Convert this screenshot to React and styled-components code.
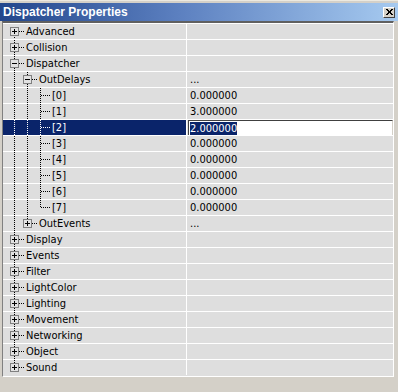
import React from 'react';
import styled, { createGlobalStyle } from 'styled-components';

const GlobalStyle = createGlobalStyle`
    html, body {
        margin: 0;
        padding: 0;
        background: #d4d0c8;
    }
    body {
        font-family: "DejaVu Sans Condensed", "Liberation Sans", Arial, sans-serif;
        font-size: 11px;
    }
`;

const rows = [
    { name: 'Advanced', level: 0, box: '+' },
    { name: 'Collision', level: 0, box: '+' },
    { name: 'Dispatcher', level: 0, box: '-' },
    { name: 'OutDelays', level: 1, box: '-', value: '...' },
    { name: '[0]', level: 2, value: '0.000000' },
    { name: '[1]', level: 2, value: '3.000000' },
    { name: '[2]', level: 2, value: '2.000000', selected: true },
    { name: '[3]', level: 2, value: '0.000000' },
    { name: '[4]', level: 2, value: '0.000000' },
    { name: '[5]', level: 2, value: '0.000000' },
    { name: '[6]', level: 2, value: '0.000000' },
    { name: '[7]', level: 2, value: '0.000000' },
    { name: 'OutEvents', level: 1, box: '+', value: '...' },
    { name: 'Display', level: 0, box: '+' },
    { name: 'Events', level: 0, box: '+' },
    { name: 'Filter', level: 0, box: '+' },
    { name: 'LightColor', level: 0, box: '+' },
    { name: 'Lighting', level: 0, box: '+' },
    { name: 'Movement', level: 0, box: '+' },
    { name: 'Networking', level: 0, box: '+' },
    { name: 'Object', level: 0, box: '+' },
    { name: 'Sound', level: 0, box: '+' },
];

// does row i have a sibling below it?
function hasNext(i) {
    const lvl = rows[i].level;
    for (let j = i + 1; j < rows.length; j++) {
        if (rows[j].level < lvl) return false;
        if (rows[j].level === lvl) return true;
    }
    return false;
}

function ancestor(i, lvl) {
    for (let j = i - 1; j >= 0; j--) {
        if (rows[j].level === lvl) return j;
    }
    return -1;
}

const STEP = 13;
const CX0 = 11;
const TEXT_GAP = 12;

function Guides({ index }) {
    const row = rows[index];
    const cx = CX0 + STEP * row.level;
    const width = cx + TEXT_GAP;
    const mid = 7;
    const lines = [];

    for (let a = 0; a < row.level; a++) {
        const anc = ancestor(index, a);
        if (anc >= 0 && hasNext(anc)) {
            const x = CX0 + STEP * a + 0.5;
            lines.push(<line key={'a' + a} x1={x} y1={0} x2={x} y2={15} />);
        }
    }

    const x = cx + 0.5;
    const top = index === 0 ? mid : 0;
    const bottom = hasNext(index) ? 15 : mid;
    lines.push(<line key="v" x1={x} y1={top} x2={x} y2={bottom} />);
    lines.push(
        <line key="h" x1={row.box ? cx + 5 : cx + 1} y1={mid + 0.5} x2={width - 1} y2={mid + 0.5} />
    );

    return (
        <svg width={width} height={15} shapeRendering="crispEdges" style={{ flex: 'none' }}>
            <g stroke="currentColor" strokeWidth="1" strokeDasharray="1 1">
                {lines}
            </g>
            {row.box && (
                <g>
                    <rect x={cx - 4 + 0.5} y={mid - 4 + 0.5} width={8} height={8} fill="#e2e2e2" stroke="#808080" />
                    <line x1={cx - 2} y1={mid + 0.5} x2={cx + 3} y2={mid + 0.5} stroke="#000" />
                    {row.box === '+' && (
                        <line x1={cx + 0.5} y1={mid - 2} x2={cx + 0.5} y2={mid + 3} stroke="#000" />
                    )}
                </g>
            )}
        </svg>
    );
}

function App() {
    return (
        <Window>
            <GlobalStyle />
            <TitleBar>
                <Title>Dispatcher Properties</Title>
                <CloseButton>
                    <svg width="7" height="6" viewBox="0 0 7 6" shapeRendering="crispEdges">
                        <path d="M0 0h2v1H0zM5 0h2v1H5zM1 1h2v1H1zM4 1h2v1H4zM2 2h3v1H2zM2 3h3v1H2zM1 4h2v1H1zM4 4h2v1H4zM0 5h2v1H0zM5 5h2v1H5z" fill="#000" />
                    </svg>
                </CloseButton>
            </TitleBar>
            <Panel>
                {rows.map((row, i) => (
                    <Row key={i}>
                        <NameCell $selected={row.selected}>
                            <Guides index={i} />
                            <span>{row.name}</span>
                        </NameCell>
                        <ValueCell>
                            {row.selected ? (
                                <EditBox>
                                    <Highlight>{row.value}</Highlight>
                                </EditBox>
                            ) : (
                                row.value
                            )}
                        </ValueCell>
                    </Row>
                ))}
            </Panel>
        </Window>
    );
}

export default App;

const Window = styled.div`
    width: 398px;
    height: 392px;
    display: flex;
    flex-direction: column;
    padding-top: 2px;
    box-sizing: border-box;
    background: #d4d0c8;
    border-top: 1px solid #ece9e0;
`;

const TitleBar = styled.div`
    height: 18px;
    display: flex;
    align-items: center;
    justify-content: space-between;
    padding: 0 3px 0 3px;
    background: linear-gradient(to right, #22468c, #5c80c0 45%, #a6caf0);
`;

const Title = styled.div`
    color: #fff;
    font-family: "Liberation Sans", Arial, sans-serif;
    font-weight: bold;
    font-size: 12px;
`;

const CloseButton = styled.div`
    width: 12px;
    height: 11px;
    box-sizing: border-box;
    display: flex;
    align-items: center;
    justify-content: center;
    background: #d4d0c8;
    border: 1px solid;
    border-color: #fff #404040 #404040 #fff;
`;

const Panel = styled.div`
    margin-left: 2px;
    width: 392px;
    box-sizing: border-box;
    display: flex;
    flex-direction: column;
    border-top: 2px solid #606060;
    border-left: 1px solid #808080;
    border-right: 1px solid #fff;
    border-bottom: 1px solid #fff;
    padding-bottom: 1px;
    background: #dedede;
`;

const Row = styled.div`
    display: grid;
    grid-template-columns: 183px 206px;
    column-gap: 1px;
    height: 15px;
    border-top: 1px solid #fff;
    background: #fff;
`;

const NameCell = styled.div`
    display: flex;
    align-items: center;
    background: ${(p) => (p.$selected ? '#0a246a' : '#dedede')};
    color: ${(p) => (p.$selected ? '#fff' : '#000')};
    white-space: nowrap;
    line-height: 15px;
`;

const ValueCell = styled.div`
    display: flex;
    align-items: center;
    padding-left: 3px;
    background: #dedede;
    color: #000;
    line-height: 15px;
`;

const EditBox = styled.div`
    flex: 1;
    align-self: stretch;
    margin-left: -2px;
    display: flex;
    align-items: center;
    padding-left: 1px;
    background: #fff;
    border-top: 1px solid #404040;
    border-left: 1px solid #404040;
    border-right: 1px solid #d4d0c8;
`;

const Highlight = styled.span`
    background: #0a246a;
    color: #fff;
    line-height: 13px;
`;
